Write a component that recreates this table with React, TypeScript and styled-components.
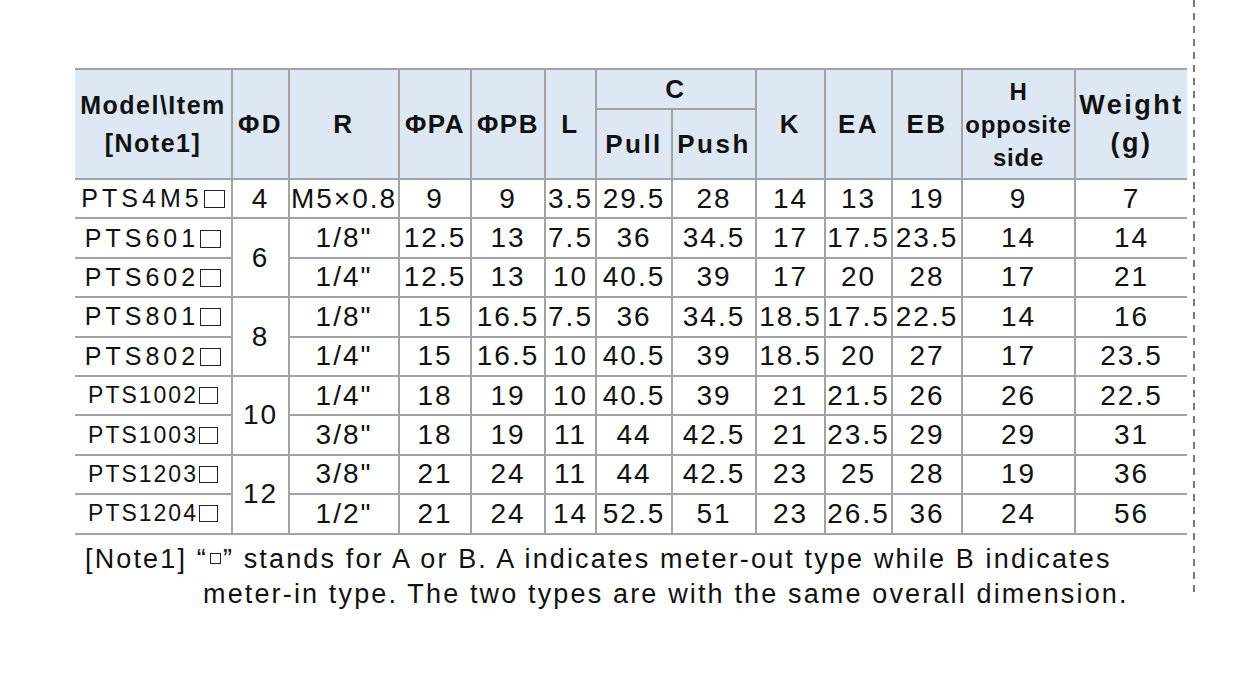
import React from 'react';
import styled, { createGlobalStyle } from 'styled-components';

const GlobalStyle = createGlobalStyle`
  html, body {
    margin: 0;
    padding: 0;
    background: #ffffff;
  }
  body {
    font-family: 'Liberation Sans', Arial, sans-serif;
    color: #111111;
  }
`;

const Page = styled.div`
  width: 1252px;
  height: 679px;
  display: flex;
  align-items: flex-start;
  overflow: hidden;
`;

const Content = styled.div`
  width: 1112px;
  padding: 68px 0 0 75px;
  margin-right: 6px;
`;

const DashedRule = styled.div`
  width: 2px;
  height: 598px;
  flex: none;
  background: repeating-linear-gradient(to bottom, #7a7a7a 0 7px, transparent 7px 13px);
`;

const Table = styled.table`
  width: 1112px;
  table-layout: fixed;
  border-collapse: collapse;
  border-top: 2px solid #9c9c9c;
  border-bottom: 2px solid #9c9c9c;

  td,
  th {
    border: 2px solid #a3a3a3;
    padding: 0;
    text-align: center;
    vertical-align: middle;
    white-space: nowrap;
    overflow: visible;
  }

  tr > :first-child {
    border-left: none;
  }

  tr > :last-child {
    border-right: none;
  }
`;

const Head = styled.th<{ $size?: number; $spacing?: number; $lines?: number }>`
  background: #dde8f4;
  font-weight: bold;
  font-size: ${(p) => p.$size ?? 26}px;
  letter-spacing: ${(p) => p.$spacing ?? 2.5}px;
  line-height: ${(p) => (p.$lines ? 33 : 38)}px;
  color: #111;
`;

const HeadRow = styled.tr<{ $height: number }>`
  height: ${(p) => p.$height}px;
`;

const Row = styled.tr`
  height: 39.4px;
`;

const Cell = styled.td`
  font-size: 28px;
  letter-spacing: 2px;
  color: #111;
`;

const ModelCell = styled.td<{ $small?: boolean }>`
  font-size: ${(p) => (p.$small ? 23 : 25)}px;
  letter-spacing: ${(p) => (p.$small ? 2 : 4)}px;
  color: #111;
`;

const Box = styled.span<{ $small?: boolean }>`
  display: inline-block;
  box-sizing: border-box;
  width: ${(p) => (p.$small ? 19 : 21)}px;
  height: ${(p) => (p.$small ? 17 : 18)}px;
  border: 1.5px solid #222;
  margin-left: 1px;
  vertical-align: -1px;
`;

const Note = styled.div`
  margin-top: 7px;
  padding-left: 10px;
  font-size: 27px;
  line-height: 35px;
  letter-spacing: 2.15px;
  color: #111;
`;

const NoteLine = styled.div<{ $indent?: number }>`
  padding-left: ${(p) => p.$indent ?? 0}px;
  white-space: nowrap;
`;

const NoteSquare = styled.span`
  display: inline-block;
  width: 9px;
  height: 9px;
  border: 1.5px solid #222;
  margin: 0 2px;
  vertical-align: 4px;
`;

type RowData = {
  model: string;
  d?: { value: string; span: number };
  values: string[];
  small?: boolean;
};

const rows: RowData[] = [
  { model: 'PTS4M5', d: { value: '4', span: 1 }, values: ['M5×0.8', '9', '9', '3.5', '29.5', '28', '14', '13', '19', '9', '7'] },
  { model: 'PTS601', d: { value: '6', span: 2 }, values: ['1/8"', '12.5', '13', '7.5', '36', '34.5', '17', '17.5', '23.5', '14', '14'] },
  { model: 'PTS602', values: ['1/4"', '12.5', '13', '10', '40.5', '39', '17', '20', '28', '17', '21'] },
  { model: 'PTS801', d: { value: '8', span: 2 }, values: ['1/8"', '15', '16.5', '7.5', '36', '34.5', '18.5', '17.5', '22.5', '14', '16'] },
  { model: 'PTS802', values: ['1/4"', '15', '16.5', '10', '40.5', '39', '18.5', '20', '27', '17', '23.5'] },
  { model: 'PTS1002', small: true, d: { value: '10', span: 2 }, values: ['1/4"', '18', '19', '10', '40.5', '39', '21', '21.5', '26', '26', '22.5'] },
  { model: 'PTS1003', small: true, values: ['3/8"', '18', '19', '11', '44', '42.5', '21', '23.5', '29', '29', '31'] },
  { model: 'PTS1203', small: true, d: { value: '12', span: 2 }, values: ['3/8"', '21', '24', '11', '44', '42.5', '23', '25', '28', '19', '36'] },
  { model: 'PTS1204', small: true, values: ['1/2"', '21', '24', '14', '52.5', '51', '23', '26.5', '36', '24', '56'] },
];

const widths = [157, 57, 110, 72, 74, 51, 76, 84, 69, 67, 70, 113, 112];

export default function App() {
  return (
    <>
      <GlobalStyle />
      <Page>
        <Content>
          <Table>
            <colgroup>
              {widths.map((w, i) => (
                <col key={i} style={{ width: w }} />
              ))}
            </colgroup>
            <thead>
              <HeadRow $height={40}>
                <Head rowSpan={2} $size={25} $spacing={1.5}>
                  Model\Item
                  <br />
                  [Note1]
                </Head>
                <Head rowSpan={2}>ΦD</Head>
                <Head rowSpan={2}>R</Head>
                <Head rowSpan={2} $spacing={1.5}>ΦPA</Head>
                <Head rowSpan={2} $spacing={1.5}>ΦPB</Head>
                <Head rowSpan={2}>L</Head>
                <Head colSpan={2}>C</Head>
                <Head rowSpan={2}>K</Head>
                <Head rowSpan={2}>EA</Head>
                <Head rowSpan={2}>EB</Head>
                <Head rowSpan={2} $size={24} $spacing={0.8} $lines={3}>
                  H
                  <br />
                  opposite
                  <br />
                  side
                </Head>
                <Head rowSpan={2} $size={27}>
                  Weight
                  <br />
                  (g)
                </Head>
              </HeadRow>
              <HeadRow $height={70}>
                <Head $spacing={2.5}>Pull</Head>
                <Head $spacing={2.5}>Push</Head>
              </HeadRow>
            </thead>
            <tbody>
              {rows.map((r) => (
                <Row key={r.model}>
                  <ModelCell $small={r.small}>
                    {r.model}
                    <Box $small={r.small} />
                  </ModelCell>
                  {r.d && <Cell rowSpan={r.d.span}>{r.d.value}</Cell>}
                  {r.values.map((v, i) => (
                    <Cell key={i}>{v}</Cell>
                  ))}
                </Row>
              ))}
            </tbody>
          </Table>
          <Note>
            <NoteLine>
              [Note1] “<NoteSquare />” stands for A or B. A indicates meter-out type while B indicates
            </NoteLine>
            <NoteLine $indent={118}>
              meter-in type. The two types are with the same overall dimension.
            </NoteLine>
          </Note>
        </Content>
        <DashedRule />
      </Page>
    </>
  );
}
